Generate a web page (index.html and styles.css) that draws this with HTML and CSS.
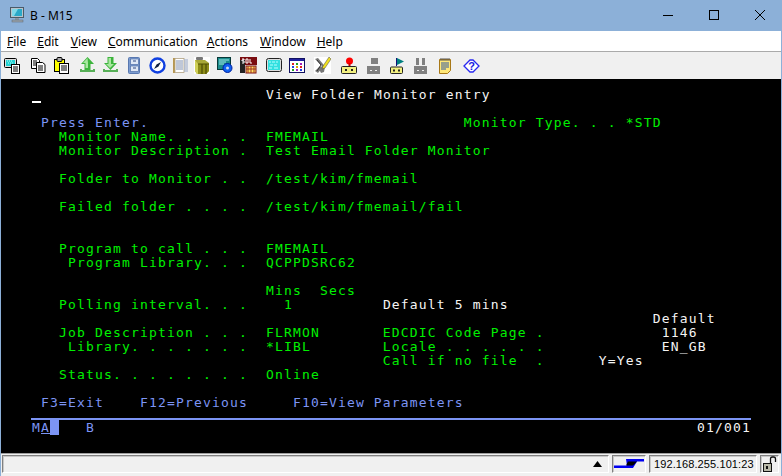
FILE: index.html
```html
<!DOCTYPE html>
<html lang="en">
<head>
<meta charset="utf-8">
<title>B - M15</title>
<link rel="stylesheet" href="styles.css">
</head>
<body>
<div class="window">
  <header class="titlebar">
    <svg class="appicon" width="16" height="16" viewBox="0 0 16 16"><rect x="1.5" y="0.5" width="13" height="10" fill="#b8c4cc" stroke="#4a5a68"/><rect x="3" y="2" width="10" height="7" fill="#2aa8c8"/><path d="M3 2h6l-4 7H3z" fill="#7fd8e8"/><rect x="6" y="11" width="4" height="2" fill="#8a96a0"/><rect x="3" y="13" width="11" height="2" fill="#9aa4ac" stroke="#5c6670" stroke-width="0.5"/></svg>
    <span class="title">B - M15</span>
    <div class="winbtns">
      <svg class="winbtn" width="46" height="30" viewBox="0 0 46 30"><path d="M18 15.500h10" stroke="#000" fill="none"/></svg>
      <svg class="winbtn" width="46" height="30" viewBox="0 0 46 30"><rect x="18.500" y="10.500" width="9" height="9" stroke="#000" fill="none"/></svg>
      <svg class="winbtn" width="46" height="30" viewBox="0 0 46 30"><path d="M18 10l10 10M28 10L18 20" stroke="#000" fill="none"/></svg>
    </div>
  </header>
  <nav class="menubar">
    <span class="menu m-file"><u>F</u>ile</span>
    <span class="menu m-edit"><u>E</u>dit</span>
    <span class="menu m-view"><u>V</u>iew</span>
    <span class="menu m-comm"><u>C</u>ommunication</span>
    <span class="menu m-act"><u>A</u>ctions</span>
    <span class="menu m-win"><u>W</u>indow</span>
    <span class="menu m-help"><u>H</u>elp</span>
  </nav>
  <div class="toolbar">
    <svg class="tool t1" width="17" height="17" viewBox="0 0 17 17"><rect x="0.5" y="1.5" width="12" height="9" rx="1" fill="#ddd" stroke="#000"/><rect x="2" y="3" width="9" height="6" fill="#22d0d0"/><path d="M3 4h1M5 4h1M7 4h1M4 6h1M6 6h1M8 6h1" stroke="#bff" /><rect x="7.5" y="7.5" width="8" height="9" fill="#fff" stroke="#000"/><path d="M9 10h5M9 12h5M9 14h5" stroke="#000"/></svg>
    <svg class="tool t2" width="15" height="15" viewBox="0 0 15 15"><path d="M0.5 0.5h6l2 2v8h-8z" fill="#fff" stroke="#000"/><path d="M2 3h4M2 5h4M2 7h4" stroke="#000"/><path d="M5.5 4.5h6l2.500 2v8h-8.500z" fill="#fff" stroke="#000"/><path d="M7 8h5M7 10h5M7 12h5" stroke="#000"/></svg>
    <svg class="tool t3" width="15" height="17" viewBox="0 0 15 17"><rect x="0.500" y="2.500" width="10" height="12" fill="#ff0" stroke="#000"/><rect x="3" y="0.500" width="5" height="4" rx="1" fill="#aaa" stroke="#000"/><rect x="5.500" y="6.500" width="9" height="10" fill="#fff" stroke="#000"/><path d="M7 9h6M7 11h6M7 13h6" stroke="#000"/></svg>
    <svg class="tool t4" width="17" height="17" viewBox="0 0 17 17"><path d="M8.500 0L15 7h-3.500v6h-6V7H2z" fill="#3cb43c"/><path d="M8.500 1L4 6h2.500v5H9V6z" fill="#a8e8a0"/><path d="M1 12v3h15v-3h-2v1H3v-1z" fill="#58b058"/></svg>
    <svg class="tool t5" width="17" height="17" viewBox="0 0 17 17"><path d="M5.500 0h6v6H15l-6.500 7L2 6h3.500z" fill="#3cb43c"/><path d="M6.500 1H9v6h3l-4 4-4-4h2.500z" fill="#a8e8a0"/><path d="M1 12v3h15v-3h-2v1H3v-1z" fill="#58b058"/></svg>
    <svg class="tool t6" width="12" height="17" viewBox="0 0 12 17"><rect x="0.500" y="0.500" width="11" height="16" rx="1" fill="#7c9cd0" stroke="#5878b0"/><rect x="2.500" y="2" width="8" height="5.500" fill="#dfe8f6" stroke="#5070a8" stroke-width="0.700"/><rect x="2.500" y="9" width="8" height="5.500" fill="#dfe8f6" stroke="#5070a8" stroke-width="0.700"/><path d="M5 4h3M5 11h3" stroke="#304880"/></svg>
    <svg class="tool t7" width="17" height="17" viewBox="0 0 17 17"><circle cx="8.500" cy="8.500" r="7" fill="#fff" stroke="#1040e0" stroke-width="2.400"/><path d="M12 5L9.500 9.500 5 12l2.500-4.500z" fill="#102040"/></svg>
    <svg class="tool t8" width="16" height="17" viewBox="0 0 16 17"><rect x="1" y="1" width="2" height="15" fill="#b89850"/><rect x="3" y="1.500" width="9" height="14" fill="#fff" stroke="#b0a080" stroke-width="0.800"/><path d="M4 4h7M4 6h7M4 8h7M4 10h7M4 12h7" stroke="#8090b0"/><path d="M13 2v13M15 2v13" stroke="#98a8c8"/></svg>
    <svg class="tool t9" width="16" height="17" viewBox="0 0 16 17"><rect width="16" height="17" fill="#fff"/><rect x="2" y="0" width="7" height="3" rx="1" fill="#777"/><path d="M1 3h10l4 3v8l-3 3H3L1 14z" fill="#a8a838"/><path d="M1 3l3 4v10H3L1 14z" fill="#d0d058"/><path d="M4 7h11v7l-3 3H4z" fill="#8c8c18"/><path d="M8 7v10M12 7v10" stroke="#3c3c00"/><path d="M4 7h11" stroke="#505000"/></svg>
    <svg class="tool t10" width="16" height="17" viewBox="0 0 16 17"><rect x="0.500" y="0.500" width="13" height="12" fill="#1c8c8c" stroke="#083838"/><path d="M2 3h10M2 5h7M2 7h5" stroke="#9fe8e8"/><circle cx="10.500" cy="11" r="4.500" fill="#1060f0" stroke="#0020a0"/><circle cx="10.500" cy="11" r="1.500" fill="#cde"/></svg>
    <svg class="tool t11" width="17" height="17" viewBox="0 0 17 17"><rect x="0" y="0" width="17" height="8" fill="#7a0c10"/><rect x="0" y="3" width="5" height="13" fill="#222"/><rect x="6" y="9" width="10" height="7" fill="#ffe060" stroke="#7a0c10"/><path d="M8 9v7M11 9v7M14 9v7M6 12h10" stroke="#a03020"/><path d="M2 2h2v1H2v1h2v2H2M6 2h2v4H6zM10 2v4h2" stroke="#fff" fill="none"/></svg>
    <svg class="tool t12" width="16" height="15" viewBox="0 0 16 15"><rect x="0.500" y="0.500" width="15" height="13" rx="2" fill="#ddd" stroke="#222"/><rect x="2" y="2" width="12" height="10" fill="#33e0e0"/><path d="M3 4h2M6 4h3M10 4h2M4 7h3M8 7h3M3 10h3M8 10h4" stroke="#b8ffff"/></svg>
    <svg class="tool t13" width="16" height="15" viewBox="0 0 16 15"><rect x="0.500" y="0.500" width="15" height="14" fill="#fff" stroke="#101060"/><rect x="1" y="1" width="14" height="2" fill="#2020a0"/><path d="M3 5h2v2H3z" fill="#e02020"/><path d="M7 5h2v2H7z" fill="#20a020"/><path d="M11 5h2v2h-2z" fill="#a020c0"/><path d="M3 8h2v2H3z" fill="#2040e0"/><path d="M7 8h2v2H7z" fill="#e0a000"/><path d="M11 8h2v2h-2z" fill="#e02020"/><path d="M3 11h2v2H3z" fill="#20a020"/><path d="M7 11h2v2H7z" fill="#a020c0"/><path d="M11 11h2v2h-2z" fill="#2040e0"/></svg>
    <svg class="tool t14" width="17" height="17" viewBox="0 0 17 17"><rect width="17" height="17" fill="#fff"/><path d="M1 2l3-1 5 6 2 3-1 5-3 1-2-4 3-3-5-5zM1 14l5-5 2 2-4 5z" fill="#777"/><path d="M3 3l4 5-4 6" stroke="#333" fill="none"/><path d="M15 0l2 2-6 9-3 1 1-3z" fill="#f0e020" stroke="#444" stroke-width="0.500"/></svg>
    <svg class="tool t15" width="16" height="17" viewBox="0 0 16 17"><circle cx="8.500" cy="4" r="3.500" fill="#f00"/><rect x="7.500" y="6" width="2" height="4" fill="#c00"/><rect x="0.500" y="9.500" width="15" height="7" rx="1" fill="#f2f080" stroke="#222"/><path d="M4 12h2v2H4zM10 12h2v2h-2z" fill="#222"/></svg>
    <svg class="tool t16" width="13" height="16" viewBox="0 0 13 16"><rect x="4" y="0" width="7" height="6" fill="#808080"/><rect x="0" y="8" width="13" height="8" fill="#808080"/><path d="M3 12h2v1H3zM8 12h2v1H8z" fill="#eee"/></svg>
    <svg class="tool t17" width="15" height="16" viewBox="0 0 15 16"><path d="M6 0h1v8H6z" fill="#117"/><path d="M7 0l7 3.500L7 7z" fill="#008080"/><rect x="0.500" y="9" width="12" height="6.500" rx="1" fill="#f2f080" stroke="#222"/><path d="M3 11.500h2v2H3zM8 11.500h2v2H8z" fill="#222"/></svg>
    <svg class="tool t18" width="13" height="16" viewBox="0 0 13 16"><rect x="2" y="0" width="3" height="7" fill="#808080"/><rect x="8" y="0" width="3" height="7" fill="#808080"/><rect x="0" y="8" width="13" height="8" fill="#808080"/><path d="M3 12h2v1H3zM8 12h2v1H8z" fill="#eee"/></svg>
    <svg class="tool t19" width="12" height="16" viewBox="0 0 12 16"><path d="M0.500 1.500h11v11l-3 3h-8z" fill="#ffe878" stroke="#a87818"/><path d="M2 0v3M4 0v3M6 0v3M8 0v3M10 0v3" stroke="#555"/><path d="M2 5h8M2 7h8M2 9h8M2 11h5" stroke="#3058a0"/></svg>
    <svg class="tool t20" width="17" height="14" viewBox="0 0 17 14"><path d="M1 7l6-6h3l6 6-6 6H7z" fill="#fff" stroke="#2828f0" stroke-width="1.300"/><text class="qmark" x="8.500" y="11">?</text></svg>
  </div>
  <main class="terminal">
<pre class="screen"> <span class="cur"> </span>                         <span class="w">View Folder Monitor entry</span>

<span class="b">  Press Enter.</span>                                   <span class="g">Monitor Type. . . *STD</span>
<span class="g">    Monitor Name. . . . .  FMEMAIL</span>
<span class="g">    Monitor Description .  Test Email Folder Monitor</span>

<span class="g">    Folder to Monitor . .  /test/kim/fmemail</span>

<span class="g">    Failed folder . . . .  /test/kim/fmemail/fail</span>


<span class="g">    Program to call . . .  FMEMAIL</span>
<span class="g">     Program Library. . .  QCPPDSRC62</span>

<span class="g">                           Mins  Secs</span>
<span class="g">    Polling interval. . .    1</span>          <span class="w">Default 5 mins</span>
<span class="w">                                                                      Default</span>
<span class="g">    Job Description . . .  FLRMON       EDCDIC Code Page .</span>             <span class="w">1146</span>
<span class="g">     Library. . . . . . .  *LIBL        Locale . . . . . .</span>             <span class="w">EN_GB</span>
<span class="g">                                        Call if no file  .</span>      <span class="w">Y=Yes</span>
<span class="g">    Status. . . . . . . .  Online</span>

<span class="b">  F3=Exit    F12=Previous     F10=View Parameters</span></pre>
    <div class="rule"></div>
    <div class="oia"><span class="b oia-left"> M<span class="under">A</span><span class="block"> </span>   B</span><span class="w">01/001</span></div>
  </main>
  <footer class="statusbar">
    <div class="field f-main"><svg width="9" height="6" viewBox="0 0 9 6"><path d="M4.500 0L9 6H0z" fill="#000"/></svg></div>
    <div class="field f-link"><svg width="30" height="12" viewBox="0 0 30 12"><path d="M12 1h18v2.500H23L19 10H0V7.500h13z" fill="#0000f0"/><path d="M14 3.500h9L19 7.500h-7z" fill="#000"/></svg></div>
    <div class="field f-ip">192.168.255.101:23</div>
    <div class="field f-lock"><svg width="14" height="17" viewBox="0 0 14 17"><rect x="0.500" y="7.500" width="8" height="8" fill="#b8b8a8" stroke="#111"/><path d="M4 10v3" stroke="#111" stroke-width="2"/><path d="M7.500 8V3q0-2 2-2h1q2 0 2 2v3" fill="none" stroke="#111" stroke-width="1.300"/></svg></div>
  </footer>
</div>
</body>
</html>
```
FILE: styles.css
```css
* { box-sizing: border-box; }
html, body { margin: 0; padding: 0; }
body { width: 782px; height: 476px; overflow: hidden; background: #8cb0d8; font-family: "Noto Sans", "Open Sans", sans-serif; }
.window { display: flex; flex-direction: column; width: 782px; height: 476px; }

.titlebar { height: 31px; flex: none; display: flex; align-items: center; background: #8cb0d8; padding-left: 9px; }
.appicon { margin-top: -1px; }
.title { margin-left: 5px; font-size: 12px; color: #000; }
.winbtns { display: flex; margin-left: auto; margin-right: -1px; margin-top: -2px; }
.winbtn { display: block; width: 46px; height: 30px; }

.menubar { height: 21px; flex: none; display: flex; align-items: center; background: #fff; margin: 0 1px; border-bottom: 1px solid #aaa; font-size: 12px; color: #000; padding-left: 6px; }
.menu { white-space: nowrap; }
.m-edit { margin-left: 11px; }
.m-view { margin-left: 12px; }
.m-comm { margin-left: 11px; }
.m-act { margin-left: 9px; }
.m-win { margin-left: 12px; }
.m-help { margin-left: 11px; }

.toolbar { height: 27px; flex: none; display: flex; align-items: center; background: #f0f0f0; margin: 0 1px; padding-left: 3px; }
.tool { display: block; flex: none; }
.t2 { margin-left: 10px; }
.t3 { margin-left: 8px; }
.t4 { margin-left: 10px; }
.t5 { margin-left: 6px; }
.t6 { margin-left: 9px; }
.t7 { margin-left: 9px; }
.t8 { margin-left: 6px; }
.t9 { margin-left: 6px; }
.t10 { margin-left: 7px; }
.t11 { margin-left: 7px; }
.t12 { margin-left: 9px; }
.t13 { margin-left: 7px; }
.t14 { margin-left: 9px; }
.t15 { margin-left: 10px; }
.t16 { margin-left: 10px; }
.t17 { margin-left: 10px; }
.t18 { margin-left: 9px; }
.t19 { margin-left: 12px; }
.t20 { margin-left: 12px; }
.qmark { font: bold 11px "Liberation Sans", sans-serif; fill: #1818e0; text-anchor: middle; }

.terminal { flex: 1; min-height: 0; background: #000; margin: 0 1px; padding: 9px 0 0 22px; font-family: "DejaVu Sans Mono", monospace; font-size: 13px; }
.screen { margin: 0; font: inherit; line-height: 14px; letter-spacing: 1.17px; height: 322px; }
.w { color: #f4f4f4; }
.g { color: #00f000; }
.b { color: #7c94f4; }
.cur { color: #fff; text-decoration: underline 2px; text-underline-offset: 2px; }
.rule { height: 2px; margin: 8px 0 0 8px; width: 720px; background: #7c94f4; }
.oia { display: flex; justify-content: space-between; width: 728px; line-height: 14px; letter-spacing: 1.17px; white-space: pre; margin-top: 1px; }
.under { text-decoration: underline; }
.block { background: #7c94f4; }

.statusbar { height: 23px; flex: none; display: flex; align-items: stretch; background: #f0f0f0; margin: 0 1px; padding: 1px 2px 3px 1px; gap: 3px; border-top: 1px solid #a0a0a0; }
.field { display: flex; align-items: center; border: 1px solid; border-color: #808080 #fff #fff #808080; box-shadow: inset 1px 1px 0 #c8c8c8; font-size: 12px; color: #000; }
.f-main { width: 607px; justify-content: flex-end; padding-right: 6px; }
.f-link { width: 34px; justify-content: center; }
.f-ip { width: 108px; padding-left: 4px; font-family: "Liberation Sans", sans-serif; font-size: 11px; letter-spacing: 0.1px; }
.f-lock { width: 19px; justify-content: center; }
```
